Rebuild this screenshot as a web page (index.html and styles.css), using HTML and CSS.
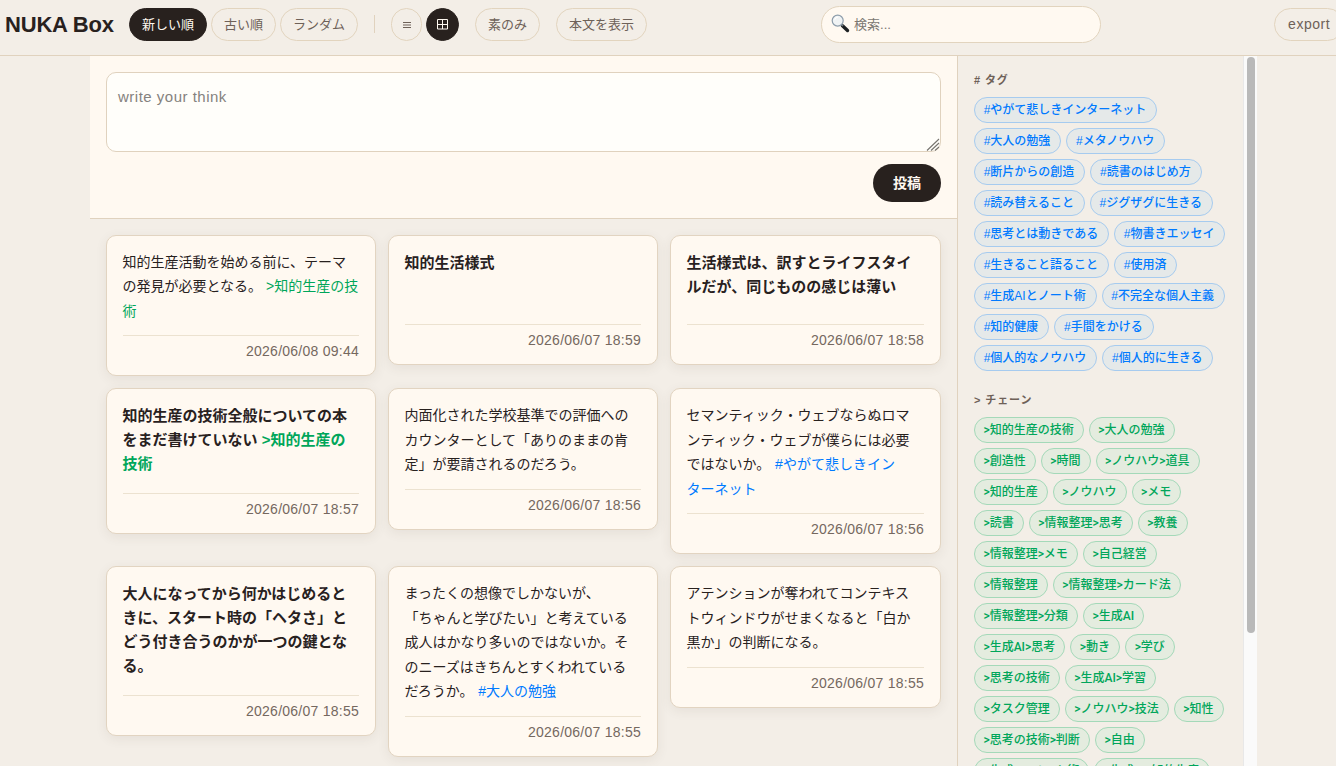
FILE: index.html
```html
<!DOCTYPE html>
<html lang="ja">
<head>
<meta charset="utf-8">
<title>NUKA Box</title>
<link rel="stylesheet" href="styles.css">
</head>
<body>
<header class="topbar">
  <h1 class="brand">NUKA Box</h1>
  <nav class="sorts">
    <button class="btn active">新しい順</button>
    <button class="btn">古い順</button>
    <button class="btn">ランダム</button>
  </nav>
  <span class="divider"></span>
  <div class="views">
    <button class="btn icon list"><svg width="8" height="7" viewBox="0 0 8 7"><path d="M0 1.500h8M0 4h8M0 6.500h8" stroke="currentColor" stroke-width="1"/></svg></button>
    <button class="btn icon active"><svg width="11" height="11" viewBox="0 0 11 11"><path d="M.5.5h10v9.500h-10zM5.500.5v9.500M.5 5.500h10" fill="none" stroke="currentColor"/></svg></button>
  </div>
  <button class="btn plain">素のみ</button>
  <button class="btn body-toggle">本文を表示</button>
  <div class="search">
    <svg width="19" height="19" viewBox="0 0 19 19"><path d="M11.500 11.800l5 4.700" stroke="#1c2022" stroke-width="3.400" stroke-linecap="round"/><path d="M10 10l2 2" stroke="#778087" stroke-width="1.500"/><circle cx="6.700" cy="6.600" r="5.500" fill="#f0f3f4" stroke="#8d9dab" stroke-width="1.200"/><path d="M3.500 5.500q1-2.200 3.500-2.500" fill="none" stroke="#fff" stroke-width="1.200"/></svg>
    <span>検索...</span>
  </div>
  <button class="btn export">export</button>
</header>
<div class="layout">
  <main class="main">
    <section class="composer">
      <div class="draft-box">
        <textarea class="draft" placeholder="write your think"></textarea>
        <svg class="grip" width="14" height="13" viewBox="0 0 14 13"><path d="M1 12.500L13 1M5 12.500L13 5M9 12.500L13 9" stroke="#77746f" stroke-width="1.100"/></svg>
      </div>
      <button class="post">投稿</button>
    </section>
    <section class="cards">
      <article class="card"><p>知的生産活動を始める前に、テーマ<br>の発見が必要となる。 <a class="chain-link">&gt;知的生産の技<br>術</a></p><time>2026/06/08 09:44</time></article>
      <article class="card title"><p>知的生活様式</p><time>2026/06/07 18:59</time></article>
      <article class="card title"><p>生活様式は、訳すとライフスタイ<br>ルだが、同じものの感じは薄い</p><time>2026/06/07 18:58</time></article>
      <article class="card title"><p>知的生産の技術全般についての本<br>をまだ書けていない <a class="chain-link">&gt;知的生産の<br>技術</a></p><time>2026/06/07 18:57</time></article>
      <article class="card"><p>内面化された学校基準での評価への<br>カウンターとして「ありのままの肯<br>定」が要請されるのだろう。</p><time>2026/06/07 18:56</time></article>
      <article class="card"><p>セマンティック・ウェブならぬロマ<br>ンティック・ウェブが僕らには必要<br>ではないか。 <a class="tag-link">#やがて悲しきイン<br>ターネット</a></p><time>2026/06/07 18:56</time></article>
      <article class="card title"><p>大人になってから何かはじめると<br>きに、スタート時の「ヘタさ」と<br>どう付き合うのかが一つの鍵とな<br>る。</p><time>2026/06/07 18:55</time></article>
      <article class="card"><p>まったくの想像でしかないが、<br>「ちゃんと学びたい」と考えている<br>成人はかなり多いのではないか。そ<br>のニーズはきちんとすくわれている<br>だろうか。 <a class="tag-link">#大人の勉強</a></p><time>2026/06/07 18:55</time></article>
      <article class="card"><p>アテンションが奪われてコンテキス<br>トウィンドウがせまくなると「白か<br>黒か」の判断になる。</p><time>2026/06/07 18:55</time></article>
    </section>
  </main>
  <aside class="sidebar">
    <h2>#&nbsp;タグ</h2>
    <div class="pills tags">
      <span>#やがて悲しきインターネット</span><span>#大人の勉強</span><span>#メタノウハウ</span><span>#断片からの創造</span><span>#読書のはじめ方</span><span>#読み替えること</span><span>#ジグザグに生きる</span><span>#思考とは動きである</span><span>#物書きエッセイ</span><span>#生きること語ること</span><span>#使用済</span><span>#生成AIとノート術</span><span>#不完全な個人主義</span><span>#知的健康</span><span>#手間をかける</span><span>#個人的なノウハウ</span><span>#個人的に生きる</span>
    </div>
    <h2>&gt;&nbsp;チェーン</h2>
    <div class="pills chains">
      <span>&gt;知的生産の技術</span><span>&gt;大人の勉強</span><span>&gt;創造性</span><span>&gt;時間</span><span>&gt;ノウハウ&gt;道具</span><span>&gt;知的生産</span><span>&gt;ノウハウ</span><span>&gt;メモ</span><span>&gt;読書</span><span>&gt;情報整理&gt;思考</span><span>&gt;教養</span><span>&gt;情報整理&gt;メモ</span><span>&gt;自己経営</span><span>&gt;情報整理</span><span>&gt;情報整理&gt;カード法</span><span>&gt;情報整理&gt;分類</span><span>&gt;生成AI</span><span>&gt;生成AI&gt;思考</span><span>&gt;動き</span><span>&gt;学び</span><span>&gt;思考の技術</span><span>&gt;生成AI&gt;学習</span><span>&gt;タスク管理</span><span>&gt;ノウハウ&gt;技法</span><span>&gt;知性</span><span>&gt;思考の技術&gt;判断</span><span>&gt;自由</span><span>&gt;生成AI&gt;ノート術</span><span>&gt;生成AI&gt;知的生産</span>
    </div>
  </aside>
  <div class="scroll-track"><div class="scroll-thumb"></div></div>
</div>
</body>
</html>
```

FILE: styles.css
```css
* { box-sizing: border-box; }
body {
  margin: 0;
  width: 1336px;
  height: 766px;
  overflow: hidden;
  background: #f3eee7;
  color: #28211e;
  font-family: "Liberation Sans", "Noto Sans CJK JP", sans-serif;
  font-size: 14px;
}
button, textarea { font-family: inherit; }

.topbar {
  display: flex;
  align-items: center;
  height: 56px;
  padding: 0 0 7px 5px;
  border-bottom: 1px solid #e0d2be;
  overflow: hidden;
}
.topbar > * { flex: none; }
.brand {
  width: 109px;
  margin: 0 15px 0 0;
  font-size: 22px;
  line-height: 33px;
  letter-spacing: -0.2px;
  white-space: nowrap;
}
.sorts, .views { display: flex; gap: 4px; }
.btn {
  height: 33px;
  padding: 0 12px;
  border: 1px solid #e2d4be;
  border-radius: 17px;
  background: transparent;
  color: #6e6158;
  font-size: 13px;
  line-height: 29px;
  white-space: nowrap;
}
.btn.active { background: #28211e; border-color: #28211e; color: #fff9f1; }
.divider { width: 1px; height: 18px; margin: 0 16px; background: #e0d2be; }
.btn.icon { display: flex; align-items: center; justify-content: center; width: 33px; padding: 0; }
.btn.icon.list { width: 31px; }
.plain { margin: 0 16px; }
.search {
  display: flex;
  align-items: center;
  gap: 4px;
  width: 280px;
  height: 37px;
  margin: 0 173px 0 174px;
  padding: 0 9px 1px;
  border: 1px solid #e2d4be;
  border-radius: 19px;
  background: #fff9f1;
  color: #7b7772;
  font-size: 13px;
}
.export { width: 70px; padding: 0 10px; font-size: 14px; letter-spacing: 0.5px; }

.layout { display: flex; height: 710px; margin-left: 90px; overflow: hidden; }
.main { width: 868px; flex: none; border-right: 1px solid #e0d2be; }
.composer {
  display: flex;
  flex-direction: column;
  align-items: flex-end;
  gap: 12px;
  height: 163px;
  padding: 16px;
  border-bottom: 1px solid #e0d2be;
  background: #fff9f1;
}
.draft-box { position: relative; width: 100%; height: 80px; }
.draft {
  display: block;
  width: 100%;
  height: 80px;
  padding: 12px 11px;
  border: 1px solid #e0d2be;
  border-radius: 10px;
  background: #fffefa;
  font-size: 15px;
  line-height: 24px;
  letter-spacing: 0.5px;
  resize: none;
}
.draft::placeholder { color: #85827e; }
.grip { position: absolute; right: 1px; bottom: 1px; }
.post {
  width: 68px;
  height: 38px;
  padding: 0 0 2px;
  border: 0;
  border-radius: 19px;
  background: #28211e;
  color: #fff9f1;
  font-size: 14px;
  font-weight: 700;
}

.cards {
  display: grid;
  grid-template-columns: 270px 270px 271px;
  align-items: start;
  gap: 12px;
  padding: 15.5px 16px;
}
.card {
  display: flex;
  flex-direction: column;
  min-height: 130px;
  padding: 14px 16px 14px 15.5px;
  border: 1px solid #e2d4c1;
  border-radius: 10px;
  background: #fff9f1;
  box-shadow: 0 3px 12px rgba(80, 65, 45, 0.08);
}
.card p { margin: 0 0 12px; line-height: 24.5px; white-space: nowrap; }
.card.title p { margin-bottom: 17px; padding-top: 1px; font-size: 15px; font-weight: 700; line-height: 24px; }
.card time {
  margin-top: auto;
  padding: 7px 0 1.5px;
  border-top: 1px solid #ece2d0;
  color: #75685f;
  line-height: 16.5px;
  letter-spacing: 0.25px;
  text-align: right;
}
.tag-link { margin-left: 1px; color: #007aff; }
.chain-link { color: #00a65a; }

.sidebar { width: 285px; flex: none; padding: 16px 12px 0 16px; }
.sidebar h2 {
  height: 16px;
  margin: 0 0 9px;
  color: #6e6158;
  font-size: 11px;
  line-height: 16px;
  letter-spacing: 0.9px;
}
.pills { display: flex; flex-wrap: wrap; gap: 5px; margin-bottom: 21px; }
.pills span {
  height: 26px;
  border: 1px solid;
  border-radius: 13px;
  font-size: 12px;
  font-weight: 500;
  line-height: 25px;
  white-space: nowrap;
}
.tags span { padding: 0 9.9px 0 8.7px; border-color: #a6cbef; background: #e5e9e9; color: #007aff; }
.chains span {
  padding: 0 9.2px 0 8.4px;
  border-color: #a4d9b9;
  background: #e4ecdf;
  color: #00a65a;
  font-family: Roboto, "Noto Sans CJK JP", sans-serif;
}
.scroll-track {
  width: 14px;
  height: 710px;
  padding: 1px 2px 0 3px;
  border-left: 1px solid #e8e8e8;
  background: #fafafa;
}
.scroll-thumb { width: 8px; height: 576px; border-radius: 4px; background: #b9b9b9; }
```
